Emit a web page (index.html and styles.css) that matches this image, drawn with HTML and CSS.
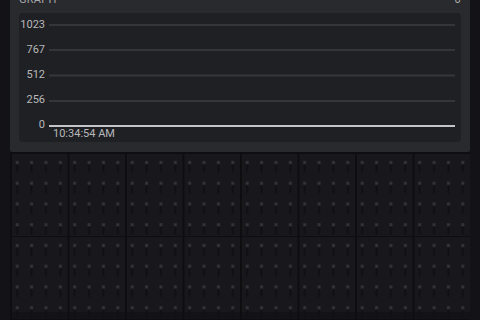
FILE: index.html
```html
<!DOCTYPE html>
<html lang="en">
<head>
    <meta charset="UTF-8">
    <meta name="viewport" content="width=device-width, initial-scale=1.0">
    <title>Dashboard</title>
    <link rel="stylesheet" href="styles.css">
</head>
<body>
    <div class="page">
        <div class="widget">
            <div class="widget-head">
                <span class="widget-title">GRAPH</span>
                <span class="widget-value">0</span>
            </div>
            <div class="chart">
                <svg class="chart-svg" width="442" height="129" viewBox="0 0 442 129">
                    <!-- grid lines -->
                    <rect class="grid-line" x="30" y="11" width="406" height="2"></rect>
                    <rect class="grid-line" x="30" y="36" width="406" height="2"></rect>
                    <rect class="grid-line" x="30" y="61.5" width="406" height="2"></rect>
                    <rect class="grid-line" x="30" y="87" width="406" height="2"></rect>
                    <rect class="base-line" x="30" y="112" width="406" height="2"></rect>

                    <text class="axis-label" x="26" y="14.5">1023</text>
                    <text class="axis-label" x="26" y="39.5">767</text>
                    <text class="axis-label" x="26" y="65">512</text>
                    <text class="axis-label" x="26" y="90">256</text>
                    <text class="axis-label" x="26" y="115">0</text>
                    <text class="time-label" x="34" y="124">10:34:54 AM</text>
                </svg>
            </div>
        </div>

        <svg class="canvas" width="460" height="168">
            <defs>
                <pattern id="dots" width="14.375" height="20.75" patternUnits="userSpaceOnUse">
                    <rect x="6.2" y="12.5" width="2" height="8" fill="#101014"></rect>
                    <rect x="5.7" y="9" width="3" height="3" fill="#323238"></rect>
                </pattern>
                <pattern id="blocks" width="57.5" height="83" patternUnits="userSpaceOnUse">
                    <rect x="0" y="0" width="2" height="83" fill="#0e0e11"></rect>
                    <rect x="0" y="0" width="57.5" height="2" fill="#0e0e11"></rect>
                </pattern>
            </defs>
            <rect width="460" height="168" fill="url(#dots)"></rect>
            <rect width="460" height="168" fill="url(#blocks)"></rect>
        </svg>
    </div>
</body>
</html>
```

FILE: styles.css
```css
* {
    box-sizing: border-box;
}

body {
    margin: 0;
    height: 320px;
    overflow: hidden;
    background-color: #131317;
    font-family: Roboto, "Liberation Sans", sans-serif;
}

.page {
    margin: 0 10px;
    height: 320px;
    background-color: #17171c;
}

.widget {
    margin-top: -8px;
    padding: 0 9px 10px;
    background-color: #292a2e;
    border-radius: 0 0 3px 3px;
}

.widget-head {
    display: flex;
    justify-content: space-between;
    height: 15px;
    line-height: 15px;
    margin-bottom: 6px;
    font-size: 11px;
    letter-spacing: 0.3px;
    color: #a9a9ac;
}

.chart {
    height: 129px;
    background-color: #1f2024;
    border-radius: 4px;
}

.chart-svg {
    display: block;
}

.grid-line {
    fill: #35363a;
}

.base-line {
    fill: #c4c4c6;
}

.axis-label {
    font-size: 11px;
    fill: #b8b8ba;
    text-anchor: end;
}

.time-label {
    font-size: 11px;
    fill: #b8b8ba;
}

.canvas {
    display: block;
}
```
